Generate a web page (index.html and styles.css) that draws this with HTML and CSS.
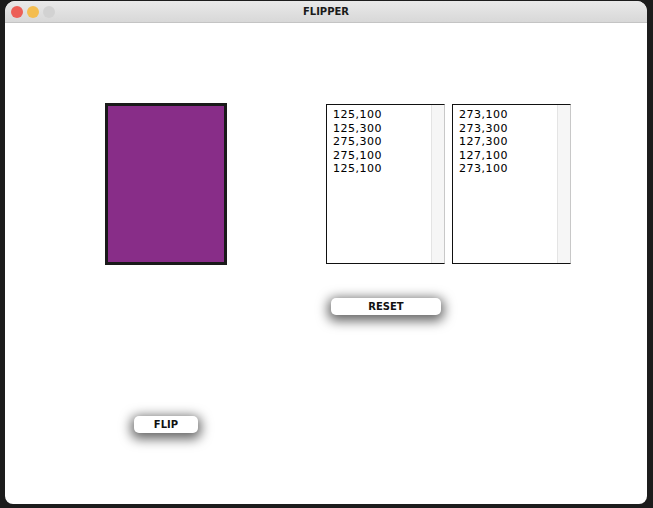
FILE: index.html
```html
<!DOCTYPE html>
<html>
<head>
<meta charset="utf-8">
<link rel="stylesheet" href="styles.css">
</head>
<body>
<div class="window">
  <div class="titlebar">
    <div class="lights">
      <span class="light red"></span>
      <span class="light yellow"></span>
      <span class="light gray"></span>
    </div>
    <div class="title">FLIPPER</div>
  </div>
  <div class="content">
    <div class="top-row">
      <div class="shape"></div>
      <div class="lists">
        <div class="list">
          <div class="items">
            <div>125,100</div>
            <div>125,300</div>
            <div>275,300</div>
            <div>275,100</div>
            <div>125,100</div>
          </div>
          <div class="scroll"></div>
        </div>
        <div class="list">
          <div class="items">
            <div>273,100</div>
            <div>273,300</div>
            <div>127,300</div>
            <div>127,100</div>
            <div>273,100</div>
          </div>
          <div class="scroll"></div>
        </div>
      </div>
    </div>
    <button class="btn reset">RESET</button>
    <button class="btn flip">FLIP</button>
  </div>
</div>
</body>
</html>
```
FILE: styles.css
```css
* { box-sizing: border-box; }
html, body {
  margin: 0;
  padding: 0;
  width: 653px;
  height: 508px;
  background: #1c1c1c;
  overflow: hidden;
  font-family: "DejaVu Sans", sans-serif;
}
body {
  padding: 1px 6px 4px 5px;
}
.window {
  width: 642px;
  height: 503px;
  background: #ffffff;
  border-radius: 10px 10px 8px 8px;
  overflow: hidden;
  display: flex;
  flex-direction: column;
}
.titlebar {
  height: 22px;
  flex: none;
  background: linear-gradient(#e9e9e9, #d8d8d8);
  border-bottom: 1px solid #c4c4c4;
  position: relative;
  display: flex;
  align-items: center;
  justify-content: center;
}
.lights {
  position: absolute;
  left: 6px;
  top: 5px;
  display: flex;
  gap: 4px;
}
.light {
  width: 12px;
  height: 12px;
  border-radius: 50%;
  display: block;
}
.red { background: #ec5f57; }
.yellow { background: #f4bd4f; }
.gray { background: #d2d2d2; }
.title {
  font-weight: bold;
  font-size: 10px;
  color: #1a1a1a;
}
.content {
  flex: 1;
  display: flex;
  flex-direction: column;
  align-items: flex-start;
}
.top-row {
  display: flex;
  align-items: flex-start;
  margin-top: 80px;
}
.shape {
  margin-left: 100px;
  width: 122px;
  height: 162px;
  background: #882d88;
  border: 3px solid #1a1a1a;
}
.lists {
  display: flex;
  gap: 7px;
  margin-left: 99px;
  margin-top: 1px;
}
.list {
  width: 119px;
  height: 160px;
  display: flex;
  border: 1px solid #111;
  border-right: 1px solid #c8c8c8;
}
.items {
  flex: 1;
  padding: 3px 0 0 6px;
  font-size: 11px;
  line-height: 13.5px;
  color: #000;
  letter-spacing: 0.5px;
  -webkit-text-stroke: 0.05px #000;
}
.scroll {
  width: 13px;
  background: #f6f6f6;
  border-left: 1px solid #e4e4e4;
}
.btn {
  font-family: "DejaVu Sans", sans-serif;
  font-weight: bold;
  font-size: 10px;
  color: #111;
  background: #ffffff;
  border: none;
  border-radius: 5px;
  height: 17px;
  padding: 0;
  box-shadow: 0 3px 12px 3px rgba(0,0,0,0.6);
  display: flex;
  align-items: center;
  justify-content: center;
}
.reset {
  margin-top: 33px;
  margin-left: 326px;
  width: 110px;
}
.flip {
  margin-top: 101px;
  margin-left: 129px;
  width: 64px;
}
```
